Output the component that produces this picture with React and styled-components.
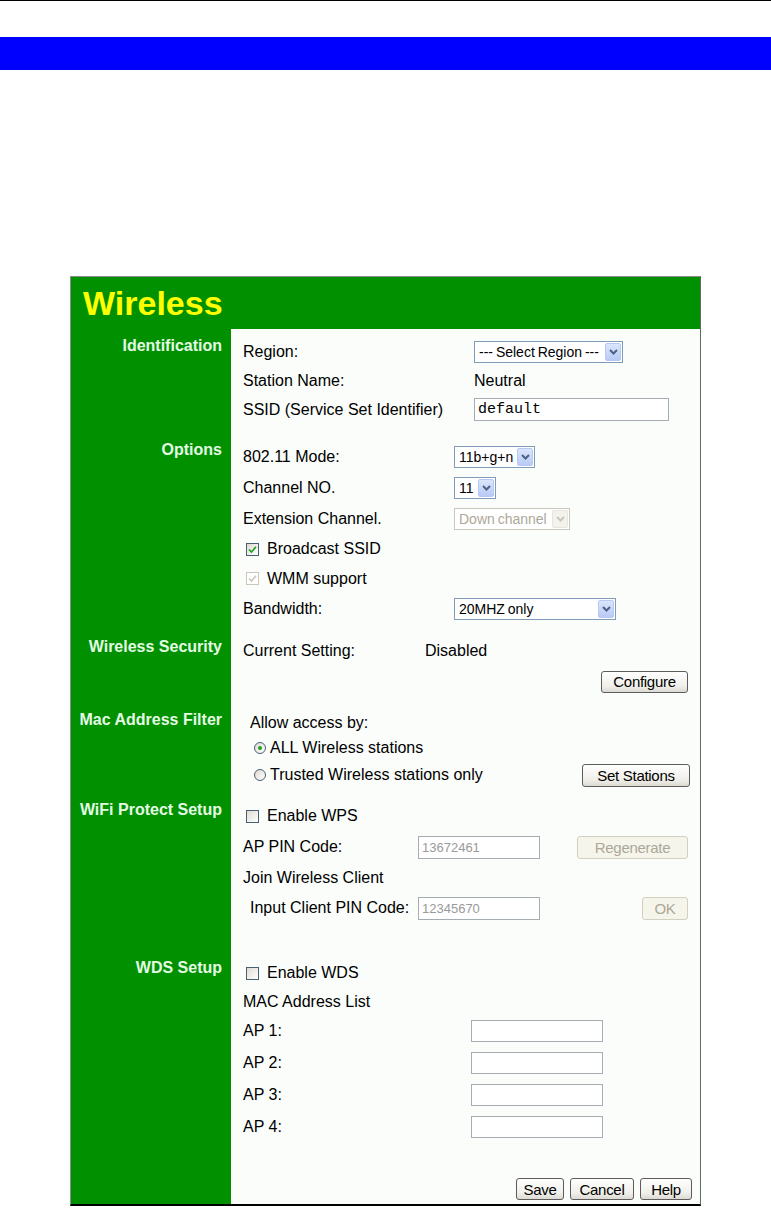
import React from "react";
import styled, { createGlobalStyle } from "styled-components";

const GlobalStyle = createGlobalStyle`
  html, body {
    margin: 0;
    padding: 0;
    background: #ffffff;
  }
  body {
    font-family: "Liberation Sans", Arial, sans-serif;
    color: #000000;
  }
`;

const Page = styled.div`
  width: 771px;
  min-height: 1209px;
`;

const TopRule = styled.div`
  height: 1px;
  background: #000000;
`;

const BlueBar = styled.div`
  margin-top: 36px;
  height: 33px;
  background: #0000ff;
`;

const Panel = styled.div`
  margin: 206px 0 0 70px;
  width: 631px;
  box-sizing: border-box;
  border-top: 1px solid #8c8c8c;
  border-left: 1px solid #8c8c8c;
  border-right: 1px solid #5e6e5e;
  border-bottom: 2px solid #000000;
  background: #009000;
`;

const Title = styled.div`
  height: 52px;
  padding-left: 12px;
  line-height: 52px;
  font-size: 34px;
  font-weight: bold;
  color: #ffff00;
`;

const Body = styled.div`
  display: grid;
  grid-template-columns: 160px 469px;
`;

const SideLabel = styled.div`
  padding: ${p => p.pad}px 9px 0 0;
  text-align: right;
  font-size: 16px;
  font-weight: bold;
  line-height: 20px;
  color: #e4fbe4;
  white-space: nowrap;
`;

const Content = styled.div`
  background: #fafdfa;
  padding-top: ${p => p.pad}px;
`;

const Row = styled.div`
  height: ${p => p.h}px;
  display: flex;
  align-items: center;
  padding-left: ${p => (p.indent === undefined ? 12 : p.indent)}px;
  padding-right: ${p => (p.right === undefined ? 12 : p.right)}px;
  font-size: 16px;
  white-space: nowrap;
`;

const Key = styled.span`
  width: ${p => p.w}px;
  flex-shrink: 0;
`;

const Spacer = styled.div`
  height: ${p => p.h}px;
`;

const Push = styled.div`
  margin-left: auto;
  display: flex;
  gap: 6px;
`;

/* select boxes */
const SelectBox = styled.div`
  width: ${p => p.w}px;
  height: 22px;
  box-sizing: border-box;
  border: 1px solid ${p => (p.disabled ? "#c9c7ba" : "#7f9db9")};
  background: #ffffff;
  display: flex;
  align-items: center;
  font-size: 14px;
  color: ${p => (p.disabled ? "#aca899" : "#000000")};
`;

const SelectText = styled.span`
  flex: 1;
  padding-left: 4px;
  overflow: hidden;
  white-space: nowrap;
  word-spacing: -1px;
`;

const ArrowBtn = styled.span`
  width: 16px;
  height: 18px;
  margin-right: 1px;
  flex-shrink: 0;
  box-sizing: border-box;
  border-radius: 2px;
  border: 1px solid ${p => (p.disabled ? "#e8e6dc" : "#b6c9f4")};
  background: ${p =>
    p.disabled ? "#f3f2ec" : "linear-gradient(#dbe5fc, #b8cbf6)"};
  display: flex;
  align-items: center;
  justify-content: center;
`;

const Select = ({ w, value, disabled }) => (
  <SelectBox w={w} disabled={disabled}>
    <SelectText>{value}</SelectText>
    <ArrowBtn disabled={disabled}>
      <svg width="9" height="6" viewBox="0 0 9 6">
        <path
          d="M1 1 L4.5 4.5 L8 1"
          fill="none"
          stroke={disabled ? "#c9c7ba" : "#4d6185"}
          strokeWidth="2"
        />
      </svg>
    </ArrowBtn>
  </SelectBox>
);

/* text inputs */
const TextInput = styled.input`
  width: ${p => p.w}px;
  height: ${p => p.h || 23}px;
  box-sizing: border-box;
  margin: 0;
  padding: 0 3px;
  border: 1px solid #a5acb2;
  background: #ffffff;
  font-family: ${p =>
    p.mono ? '"Liberation Mono", "Courier New", monospace' : '"Liberation Sans", Arial, sans-serif'};
  font-size: ${p => (p.mono ? 15 : 13)}px;
  color: #000000;
  outline: none;
  &:disabled {
    background: #ffffff;
    color: #9a9a9a;
  }
`;

/* buttons */
const Button = styled.button`
  width: ${p => p.w}px;
  height: ${p => p.h || 22}px;
  box-sizing: border-box;
  margin: 0;
  padding: 0;
  border-radius: 3px;
  border: 1px solid ${p => (p.disabled ? "#d4d0c0" : "#5c5c5c")};
  background: ${p =>
    p.disabled ? "#f6f5ec" : "linear-gradient(#ffffff, #f0efea 70%, #dcdad2)"};
  font-family: "Liberation Sans", Arial, sans-serif;
  font-size: 15px;
  letter-spacing: -0.3px;
  color: ${p => (p.disabled ? "#aca899" : "#000000")};
  cursor: default;
`;

/* checkbox and radio */
const Box = styled.span`
  width: 13px;
  height: 13px;
  flex-shrink: 0;
  box-sizing: border-box;
  border: 1px solid ${p => (p.disabled ? "#c9c7ba" : "#4a5e74")};
  background: ${p =>
    p.disabled ? "#ffffff" : "linear-gradient(135deg, #dedbd2, #ffffff)"};
  display: flex;
  align-items: center;
  justify-content: center;
  margin-right: 8px;
`;

const Check = ({ checked, disabled }) => (
  <Box disabled={disabled}>
    {checked && (
      <svg width="9" height="9" viewBox="0 0 9 9">
        <path
          d="M1 4.5 L3.5 7 L8 1.8"
          fill="none"
          stroke={disabled ? "#c9c7ba" : "#21a121"}
          strokeWidth="1.7"
        />
      </svg>
    )}
  </Box>
);

const RadioCircle = styled.span`
  width: 12px;
  height: 12px;
  flex-shrink: 0;
  box-sizing: border-box;
  border-radius: 50%;
  border: 1px solid #4a5e74;
  background: linear-gradient(135deg, #dedbd2, #ffffff);
  display: flex;
  align-items: center;
  justify-content: center;
  margin-right: 4px;
`;

const Dot = styled.span`
  width: 4px;
  height: 4px;
  border-radius: 50%;
  background: #21a121;
`;

const Radio = ({ checked }) => (
  <RadioCircle>{checked && <Dot />}</RadioCircle>
);

const Section = ({ label, pad, labelPad, children }) => (
  <>
    <SideLabel pad={labelPad}>{label}</SideLabel>
    <Content pad={pad}>{children}</Content>
  </>
);

const apList = ["AP 1:", "AP 2:", "AP 3:", "AP 4:"];

export default function App() {
  return (
    <Page>
      <GlobalStyle />
      <TopRule />
      <BlueBar />
      <Panel>
        <Title>Wireless</Title>
        <Body>
          <Section label="Identification" pad={8} labelPad={7}>
            <Row h={29}>
              <Key w={231}>Region:</Key>
              <Select w={149} value="--- Select Region ---" />
            </Row>
            <Row h={29}>
              <Key w={231}>Station Name:</Key>
              Neutral
            </Row>
            <Row h={29}>
              <Key w={231}>SSID (Service Set Identifier)</Key>
              <TextInput w={195} mono defaultValue="default" />
            </Row>
          </Section>

          <Section label="Options" pad={17} labelPad={16}>
            <Row h={31}>
              <Key w={211}>802.11 Mode:</Key>
              <Select w={81} value="11b+g+n" />
            </Row>
            <Row h={31}>
              <Key w={211}>Channel NO.</Key>
              <Select w={42} value="11" />
            </Row>
            <Row h={31}>
              <Key w={211}>Extension Channel.</Key>
              <Select w={116} value="Down channel" disabled />
            </Row>
            <Row h={30} indent={15}>
              <Check checked />
              Broadcast SSID
            </Row>
            <Row h={29} indent={15}>
              <Check checked disabled />
              WMM support
            </Row>
            <Row h={31}>
              <Key w={211}>Bandwidth:</Key>
              <Select w={162} value="20MHZ only" />
            </Row>
          </Section>

          <Section label="Wireless Security" pad={13} labelPad={13}>
            <Row h={28}>
              <Key w={182}>Current Setting:</Key>
              Disabled
            </Row>
            <Row h={33}>
              <Push>
                <Button w={87}>Configure</Button>
              </Push>
            </Row>
          </Section>

          <Section label="Mac Address Filter" pad={12} labelPad={12}>
            <Row h={26} indent={19}>
              Allow access by:
            </Row>
            <Row h={24} indent={23}>
              <Radio checked />
              ALL Wireless stations
            </Row>
            <Row h={30} indent={23} right={10}>
              <Radio />
              Trusted Wireless stations only
              <Push>
                <Button w={108} h={23}>
                  Set Stations
                </Button>
              </Push>
            </Row>
          </Section>

          <Section label="WiFi Protect Setup" pad={11} labelPad={10}>
            <Row h={30} indent={15}>
              <Check />
              Enable WPS
            </Row>
            <Row h={32}>
              <Key w={175}>AP PIN Code:</Key>
              <TextInput w={122} disabled defaultValue="13672461" />
              <Push>
                <Button w={111} h={23} disabled>
                  Regenerate
                </Button>
              </Push>
            </Row>
            <Row h={30}>Join Wireless Client</Row>
            <Row h={30} indent={19}>
              <Key w={168}>Input Client PIN Code:</Key>
              <TextInput w={122} disabled defaultValue="12345670" />
              <Push>
                <Button w={46} h={23} disabled>
                  OK
                </Button>
              </Push>
            </Row>
          </Section>

          <Section label="WDS Setup" pad={35} labelPad={35}>
            <Row h={30} indent={15}>
              <Check />
              Enable WDS
            </Row>
            <Row h={27}>MAC Address List</Row>
            {apList.map(ap => (
              <Row h={32} key={ap}>
                <Key w={228}>{ap}</Key>
                <TextInput w={132} h={22} />
              </Row>
            ))}
            <Spacer h={31} />
            <Row h={30} right={8}>
              <Push>
                <Button w={48}>Save</Button>
                <Button w={64}>Cancel</Button>
                <Button w={52}>Help</Button>
              </Push>
            </Row>
          </Section>
        </Body>
      </Panel>
    </Page>
  );
}
